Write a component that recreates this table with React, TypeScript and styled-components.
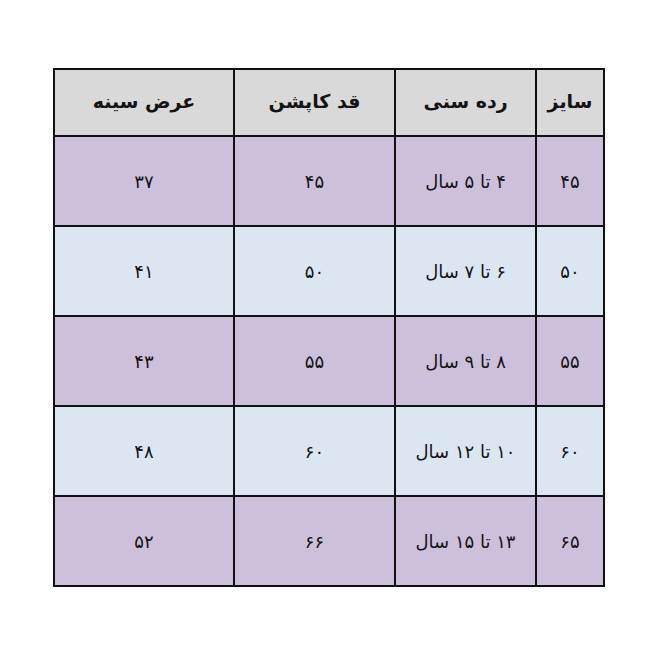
import React from "react";
import styled, { createGlobalStyle } from "styled-components";

const Global = createGlobalStyle`
  html, body { margin: 0; padding: 0; background: #ffffff; }
  body { width: 664px; height: 664px; }
`;

const Page = styled.div`
  width: 664px;
  height: 664px;
  padding-top: 68px;
  padding-left: 53px;
  box-sizing: border-box;
`;

const Table = styled.div`
  direction: rtl;
  display: grid;
  grid-template-columns: 66px 139px 159px 178px;
  grid-template-rows: 65px repeat(5, 88px);
  gap: 2px;
  padding: 2px;
  background: #111111;
  width: fit-content;
  font-family: "DejaVu Sans", "Noto Sans", sans-serif;
`;

const Cell = styled.div<{ $tone: "head" | "purple" | "blue" }>`
  display: flex;
  align-items: center;
  justify-content: center;
  background: ${(p) =>
    p.$tone === "head" ? "#d9d9d9" : p.$tone === "purple" ? "#ccc0da" : "#dce6f1"};
  color: #141414;
  font-size: ${(p) => (p.$tone === "head" ? "19px" : "18px")};
  font-weight: ${(p) => (p.$tone === "head" ? 700 : 400)};
  padding-bottom: ${(p) => (p.$tone === "head" ? "4px" : "0")};
`;

const headers = ["سایز", "رده سنی", "قد کاپشن", "عرض سینه"];
const rows = [
  ["۴۵", "۴ تا ۵ سال", "۴۵", "۳۷"],
  ["۵۰", "۶ تا ۷ سال", "۵۰", "۴۱"],
  ["۵۵", "۸ تا ۹ سال", "۵۵", "۴۳"],
  ["۶۰", "۱۰ تا ۱۲ سال", "۶۰", "۴۸"],
  ["۶۵", "۱۳ تا ۱۵ سال", "۶۶", "۵۲"],
];

export default function App() {
  return (
    <>
      <Global />
      <Page>
        <Table>
          {headers.map((h) => (
            <Cell key={h} $tone="head">{h}</Cell>
          ))}
          {rows.map((r, i) =>
            r.map((c, j) => (
              <Cell key={`${i}-${j}`} $tone={i % 2 === 0 ? "purple" : "blue"}>
                {c}
              </Cell>
            ))
          )}
        </Table>
      </Page>
    </>
  );
}
